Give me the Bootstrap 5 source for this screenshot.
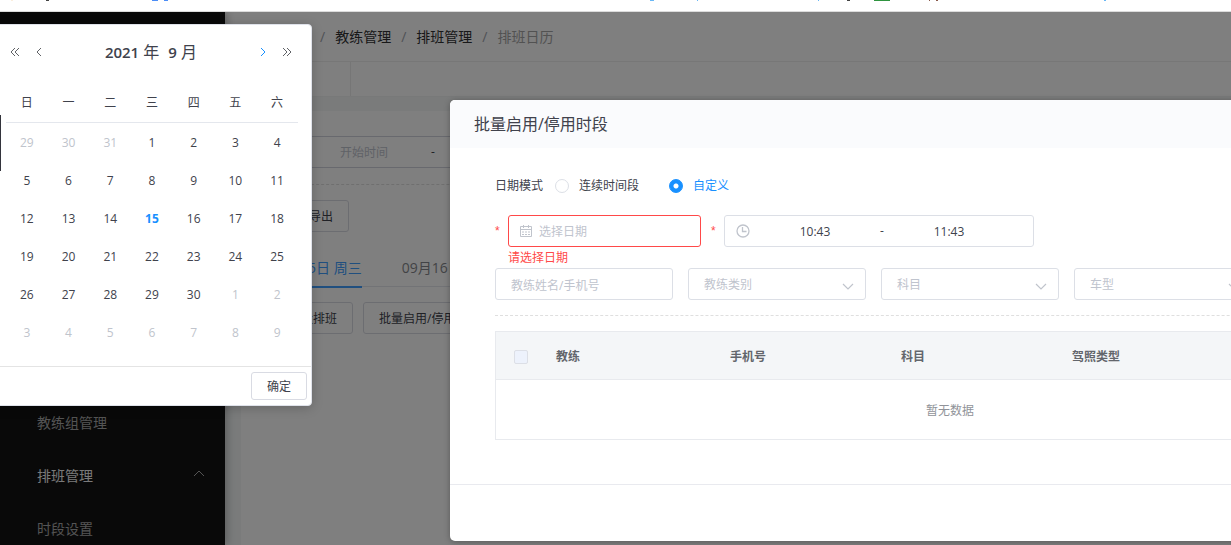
<!DOCTYPE html>
<html lang="zh-CN">
<head>
<meta charset="utf-8">
<meta name="viewport" content="width=device-width, initial-scale=1">
<title>排班日历</title>
<link href="https://cdn.jsdelivr.net/npm/bootstrap@5.3.0/dist/css/bootstrap.min.css" rel="stylesheet">
<style>
  body { font-family: "Open Sans", "Noto Sans CJK SC", sans-serif; font-size: 12px; line-height: 20px; color: #40424c; }
  button, input, select { font-family: inherit; }
  .top-strip { height: 12px; border-bottom: 1px solid #dcdcdc; }
  .top-strip svg { height: 1px; width: 1231px; flex: none; }

  /* side menu */
  .side-menu { width: 225px; background: #121212; font-size: 14px; z-index: 1; box-shadow: 2px 0 8px rgba(0,0,0,.25); }
  .side-menu .menu-gap { height: 384px; }
  .side-menu a { height: 53px; padding: 0 20px 0 37px; color: #a8a8a8; text-decoration: none; }
  .side-menu a.opened { color: #f4f4f4; }

  /* page under the mask */
  .page-main { background: #f4f7f7; min-width: 0; }
  .crumb-bar { height: 50px; padding-left: 85px; font-size: 14px; border-bottom: 1px solid #eee; background: #fff; }
  .crumb-bar .breadcrumb { --bs-breadcrumb-item-padding-x: 10px; --bs-breadcrumb-divider-color: #a0a4ad; }
  .crumb-bar .breadcrumb a { color: #303133; text-decoration: none; }
  .crumb-bar .breadcrumb .active { color: #a5a5a5; }
  .tag-bar { height: 35px; background: #fff; border-bottom: 1px solid #f1f3f3; }
  .tag-cell { width: 126px; border-right: 1px solid #ededed; }
  .page-panel { background: #fff; margin: 14px 0 0 16px; padding: 25px 15px 0 15px; }
  .bg-range { height: 32px; width: 364px; padding-left: 40px; border: 1px solid #d0d3dc; border-radius: 3px; }
  .bg-range input { width: 134px; border: 0; background: none; text-align: center; padding: 2px 0 0; }
  .dash-line { border-top: 1px dashed #dfdfdf; }
  .gap-above { margin-top: 15px; }
  .plain-btn { height: 32px; border: 1px solid #d9dbe3; border-radius: 3px; background: #fff; color: #40424c; font-size: 12px; line-height: 18px; padding: 2px 15px 0; white-space: nowrap; }
  .export-cell { width: 93px; }
  .batch-cell { width: 97px; }
  .day-tabs { height: 40px; padding-left: 14px; font-size: 14px; gap: 40px; border-bottom: 1px solid #e4e7ed; }
  .day-tabs a { color: #85878c; text-decoration: none; height: 41px; line-height: 42px; white-space: nowrap; }
  .day-tabs a.current { color: #409eff; border-bottom: 2px solid #409eff; }

  .mask { background: rgba(0,0,0,.5); z-index: 2; }

  /* dialog */
  .slot-dialog { left: 450px; top: 88px; width: 1000px; z-index: 3; background: #fff; border-radius: 5px; overflow: hidden; box-shadow: 0 1px 6px rgba(0,0,0,.3); }
  .dialog-head { height: 48px; padding: 0 24px; background: #fafbfd; }
  .dialog-head h1 { font-size: 16px; font-weight: 400; line-height: 24px; }
  .dialog-body { padding: 28px 45px 44px; }
  .dialog-foot { height: 57px; border-top: 1px solid #e9eaef; }
  .mode-row { height: 20px; }
  .mode-row .form-check-input { width: 14px; height: 14px; margin: 0; border-color: #dcdfe6; flex: none; }
  .mode-row .form-check-input:checked { background: radial-gradient(circle, #fff 2px, #1890ff 3px); border-color: #1890ff; }
  .mode-row label { margin-left: 10px; }
  .mode-row label:not(.picked) { margin-right: 30px; }
  .picked { color: #1890ff; }
  .field-row { margin-top: 19px; }
  .star { color: #ff4949; width: 13px; line-height: 32px; font-family: "Liberation Sans", sans-serif; }
  .star-next { margin-left: 10px; }
  .field { height: 32px; border: 1px solid #dcdfe6; border-radius: 3px; background: #fff; }
  .field.wrong { border-color: #ff4949; width: 193px; }
  .field input { border: 0; outline: 0; padding: 2px 0 0; background: none; min-width: 0; color: #40424c; }
  ::placeholder { color: #bfc4ce; opacity: 1; }
  .wrong-tip { color: #ff4949; height: 21px; line-height: 21px; }
  .time-field { width: 310px; }
  .time-field input { width: 124px; text-align: center; }
  .time-field span { width: 10px; text-align: center; }
  .filters { gap: 15px; }
  .filters .field { width: 178px; padding: 2px 15px 0; font-size: 12px; }
  .filters select.field { appearance: none; color: #bfc4ce; padding-right: 32px; background: #fff url("data:image/svg+xml,%3Csvg xmlns='http://www.w3.org/2000/svg' width='12' height='8' fill='none' stroke='%23c0c4cc' stroke-width='1.2'%3E%3Cpath d='M1 1l5 5 5-5'/%3E%3C/svg%3E") no-repeat right 11px top 14px; }
  .coach-table { table-layout: fixed; width: 910px; border: 1px solid #e8eaee; border-collapse: separate; border-spacing: 0; }
  .coach-table th { height: 48px; padding: 2px 10px 0; background: #f4f6f8; color: #63666c; border-bottom: 1px solid #e8eaee; font-weight: 600; vertical-align: middle; }
  .coach-table td { height: 59px; text-align: center; color: #909399; padding: 3px 0 0; vertical-align: middle; }
  .coach-table .form-check-input { width: 14px; height: 14px; margin: 0 0 0 8px; border-color: #dcdfe6; border-radius: 2px; background: #edf2fc; display: block; }
  .c-tick { width: 50px; } .c-name { width: 174px; } .c-rest { width: 171px; }

  /* date panel */
  .date-panel { left: -10px; top: 12px; width: 322px; z-index: 4; background: #fff; border: 1px solid #dfe2ea; border-radius: 4px; box-shadow: 0 2px 12px rgba(0,0,0,.2); }
  .panel-head { margin: 12px 12px 0; height: 30px; }
  .panel-head button { border: 0; background: none; padding: 0; width: 24px; height: 30px; color: #606266; display: flex; align-items: center; justify-content: center; }
  .panel-head button.picked { color: #1890ff; }
  .panel-title { font-size: 16px; gap: 9px; }
  .panel-title b { font-size: 15px; font-weight: 600; }
  .day-grid { width: 292px; margin: 18px 15px 16px; table-layout: fixed; text-align: center; }
  .day-grid th { height: 37px; font-weight: 400; padding: 0; border-bottom: 1px solid #e4e7ed; }
  .day-grid td { height: 38px; padding: 3px 0 0; }
  .day-grid .off { color: #c0c4cc; }
  .day-grid .today { color: #1890ff; font-weight: 700; }
  .panel-foot { border-top: 1px solid #e4e4e4; padding: 5px 4px; }
  .panel-foot .plain-btn { height: 28px; }
  .edge-handle { left: 0; top: 103px; width: 1px; height: 56px; background: #33343c; z-index: 5; }
</style>
</head>
<body class="vh-100 d-flex flex-column overflow-hidden">
<div class="top-strip d-flex align-items-start overflow-hidden flex-shrink-0">
  <svg viewBox="0 0 1231 1" aria-hidden="true">
    <path fill="#fbeedd" d="M11 0h2v1h-2z"/>
    <path fill="#444" d="M46 0h3v1h-3zM847 0h3v1h-3z"/>
    <path fill="#4c8df6" d="M152 0h6v1h-6zM164 0h4v1h-4z"/>
    <path fill="#69b7f5" d="M650 0h4v1h-4zM697 0h1v1h-1zM818 0h1v1h-1zM1104 0h2v1h-2z"/>
    <path fill="#8a5a4c" d="M929 0h1v1h-1zM936 0h2v1h-2z"/>
    <path fill="#2f9440" d="M874 0h16v1h-16z"/>
  </svg>
</div>
<div class="d-flex flex-grow-1 position-relative overflow-hidden">
  <nav class="side-menu flex-shrink-0">
    <div class="menu-gap"></div>
    <a href="#" class="d-flex align-items-center">教练组管理</a>
    <a href="#" class="opened d-flex align-items-center justify-content-between">排班管理
      <svg class="mb-1" width="12" height="8" fill="none" stroke="#a8a8a8" aria-hidden="true"><path d="M1 6l5-5 5 5"/></svg>
    </a>
    <a href="#" class="d-flex align-items-center">时段设置</a>
  </nav>
  <div class="page-main d-flex flex-column flex-grow-1">
    <div class="crumb-bar d-flex align-items-center flex-shrink-0">
      <ol class="breadcrumb m-0">
        <li class="breadcrumb-item"></li>
        <li class="breadcrumb-item"><a href="#">教练管理</a></li>
        <li class="breadcrumb-item"><a href="#">排班管理</a></li>
        <li class="breadcrumb-item active">排班日历</li>
      </ol>
    </div>
    <div class="tag-bar d-flex flex-shrink-0"><div class="tag-cell"></div></div>
    <div class="page-panel flex-grow-1">
      <div class="bg-range d-flex align-items-center">
        <input type="text" placeholder="开始时间" aria-label="开始时间"><span>-</span><input type="text" aria-label="结束时间">
      </div>
      <div class="dash-line mt-3"></div>
      <div class="export-cell d-flex justify-content-end gap-above"><button class="plain-btn">导出</button></div>
      <div class="day-tabs d-flex gap-above">
        <a href="#" class="current">09月15日 周三</a>
        <a href="#">09月16日 周四</a>
      </div>
      <div class="d-flex gap-above">
        <div class="batch-cell d-flex justify-content-end"><button class="plain-btn">批量排班</button></div>
        <button class="plain-btn star-next">批量启用/停用时段</button>
      </div>
    </div>
  </div>

  <div class="mask position-absolute top-0 start-0 w-100 h-100"></div>

  <section class="slot-dialog position-absolute" role="dialog" aria-labelledby="dlg-title">
    <div class="dialog-head d-flex align-items-center"><h1 class="m-0" id="dlg-title">批量启用/停用时段</h1></div>
    <div class="dialog-body">
      <div class="mode-row d-flex align-items-center">
        <span class="me-2 pe-1">日期模式</span>
        <input class="form-check-input" type="radio" name="mode" id="mode-range"><label for="mode-range">连续时间段</label>
        <input class="form-check-input" type="radio" name="mode" id="mode-custom" checked><label for="mode-custom" class="picked">自定义</label>
      </div>
      <div class="field-row d-flex">
        <span class="star">*</span>
        <div>
          <div class="field wrong d-flex align-items-center">
            <svg class="ms-2 flex-shrink-0" width="18" height="14" fill="none" stroke="#c0c4cc" aria-hidden="true"><path d="M3.500 2.500h11v10h-11zM3.500 5.500h11M6.500 1v3M11.500 1v3"/><path stroke-dasharray="2 1" d="M5 8h8M5 10.500h8"/></svg>
            <input type="text" class="flex-grow-1 ms-1" placeholder="选择日期" aria-label="选择日期">
          </div>
          <div class="wrong-tip">请选择日期</div>
        </div>
        <span class="star star-next">*</span>
        <div class="field time-field d-flex align-items-center">
          <svg class="ms-2 flex-shrink-0" width="20" height="14" fill="none" stroke="#c0c4cc" stroke-width="1.300" aria-hidden="true"><circle cx="10" cy="7" r="6"/><path d="M9.500 3v4.500h4"/></svg>
          <input type="text" value="10:43" aria-label="开始时间"><span>-</span><input type="text" value="11:43" aria-label="结束时间">
        </div>
      </div>
      <div class="filters d-flex">
        <input class="field" type="text" placeholder="教练姓名/手机号" aria-label="教练姓名/手机号">
        <select class="field" aria-label="教练类别"><option>教练类别</option></select>
        <select class="field" aria-label="科目"><option>科目</option></select>
        <select class="field" aria-label="车型"><option>车型</option></select>
      </div>
      <div class="dash-line gap-above"></div>
      <table class="coach-table gap-above">
        <colgroup><col class="c-tick"><col class="c-name"><col class="c-rest"><col class="c-rest"><col class="c-rest"><col class="c-rest"></colgroup>
        <thead><tr><th><input class="form-check-input" type="checkbox" aria-label="全选"></th><th>教练</th><th>手机号</th><th>科目</th><th>驾照类型</th><th></th></tr></thead>
        <tbody><tr><td colspan="6">暂无数据</td></tr></tbody>
      </table>
    </div>
    <div class="dialog-foot"></div>
  </section>

  <section class="date-panel position-absolute" aria-label="选择日期">
    <div class="panel-head d-flex align-items-center">
      <button aria-label="上一年"><svg width="10" height="10" fill="none" stroke="currentColor"><path d="M5 1L1 5l4 4M9 1L5 5l4 4"/></svg></button>
      <button aria-label="上个月"><svg width="10" height="10" fill="none" stroke="currentColor"><path d="M7 1L3 5l4 4"/></svg></button>
      <div class="panel-title d-flex flex-grow-1 justify-content-center"><span><b>2021</b> 年</span><span><b>9</b> 月</span></div>
      <button class="picked" aria-label="下个月"><svg width="10" height="10" fill="none" stroke="currentColor"><path d="M3 1l4 4-4 4"/></svg></button>
      <button aria-label="下一年"><svg width="10" height="10" fill="none" stroke="currentColor"><path d="M1 1l4 4-4 4M5 1l4 4-4 4"/></svg></button>
    </div>
    <table class="day-grid">
      <thead><tr><th>日</th><th>一</th><th>二</th><th>三</th><th>四</th><th>五</th><th>六</th></tr></thead>
      <tbody>
        <tr><td class="off">29</td><td class="off">30</td><td class="off">31</td><td>1</td><td>2</td><td>3</td><td>4</td></tr>
        <tr><td>5</td><td>6</td><td>7</td><td>8</td><td>9</td><td>10</td><td>11</td></tr>
        <tr><td>12</td><td>13</td><td>14</td><td class="today">15</td><td>16</td><td>17</td><td>18</td></tr>
        <tr><td>19</td><td>20</td><td>21</td><td>22</td><td>23</td><td>24</td><td>25</td></tr>
        <tr><td>26</td><td>27</td><td>28</td><td>29</td><td>30</td><td class="off">1</td><td class="off">2</td></tr>
        <tr><td class="off">3</td><td class="off">4</td><td class="off">5</td><td class="off">6</td><td class="off">7</td><td class="off">8</td><td class="off">9</td></tr>
      </tbody>
    </table>
    <div class="panel-foot d-flex justify-content-end"><button class="plain-btn">确定</button></div>
  </section>
  <div class="edge-handle position-absolute"></div>
</div>
<script src="https://cdn.jsdelivr.net/npm/bootstrap@5.3.0/dist/js/bootstrap.bundle.min.js"></script>
</body>
</html>
